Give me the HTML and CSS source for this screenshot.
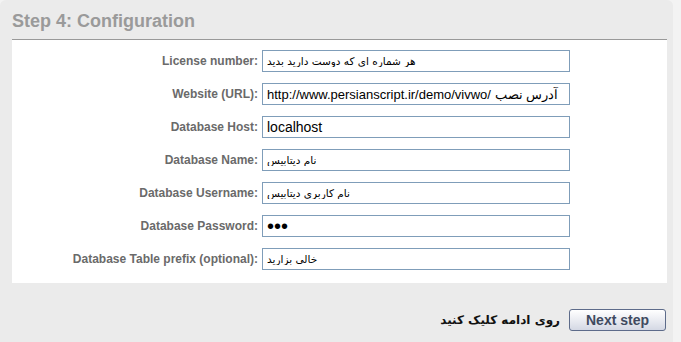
FILE: index.html
```html
<!DOCTYPE html>
<html lang="en">
<head>
  <meta charset="UTF-8">
  <title>Installation - Step 4</title>
  <link rel="stylesheet" href="styles.css">
</head>
<body>
  <div class="wizard">
    <h2 class="step-title">Step 4: Configuration</h2>

    <div class="panel">
      <form class="config-form">
        <label for="license">License number:</label>
        <input type="text" id="license" value="هر شماره اي که دوست داريد بديد">

        <label for="website">Website (URL):</label>
        <input type="text" id="website" class="url" value="http://www.persianscript.ir/demo/vivwo/ آدرس نصب">

        <label for="dbhost">Database Host:</label>
        <input type="text" id="dbhost" class="big" value="localhost">

        <label for="dbname">Database Name:</label>
        <input type="text" id="dbname" value="نام ديتابيس">

        <label for="dbuser">Database Username:</label>
        <input type="text" id="dbuser" value="نام کاربري ديتابيس">

        <label for="dbpass">Database Password:</label>
        <input type="password" id="dbpass" class="pass" value="123">

        <label for="prefix">Database Table prefix (optional):</label>
        <input type="text" id="prefix" value="خالي بزاريد">
      </form>
    </div>

    <div class="actions">
      <span class="hint" dir="rtl">روی ادامه کلیک کنید</span>
      <button type="button" class="btn-next">Next step</button>
    </div>
  </div>
</body>
</html>
```

FILE: styles.css
```css
/* Global Styles */
body {
  margin: 0;
  padding: 0;
  background-color: #f3f3f3;
  font-family: "Liberation Sans", Arial, sans-serif;
}

.wizard {
  width: 655px;
  height: 342px;
  padding: 0 6px 0 12px;
  background-color: #ebebeb;
  border-radius: 6px 6px 0 0;
}

/* Heading */
.step-title {
  margin: 0;
  padding: 11px 0 7px;
  font-size: 18px;
  line-height: 21px;
  color: #9a9a9a;
  border-bottom: 1px solid #999;
}

/* Form panel */
.panel {
  background-color: white;
  padding: 10px 0 13px;
}

.config-form {
  display: grid;
  grid-template-columns: 246px 308px;
  column-gap: 4px;
  row-gap: 11px;
  align-items: center;
}

.config-form label {
  text-align: right;
  font-size: 12px;
  font-weight: bold;
  color: #6a6a6a;
}

.config-form input {
  box-sizing: border-box;
  height: 22px;
  margin: 0;
  padding: 0 4px;
  border: 1px solid #7f9db9;
  font-family: "DejaVu Sans", "Liberation Sans", sans-serif;
  font-size: 10.5px;
  color: #000;
  background: white;
}

.config-form input.big {
  font-family: "Liberation Sans", Arial, sans-serif;
  font-size: 14px;
}

.config-form input.url {
  font-family: "Liberation Sans", Arial, sans-serif;
  font-size: 13px;
}

.config-form input.pass {
  font-family: "Liberation Sans", Arial, sans-serif;
  font-size: 20px;
}

/* Footer actions */
.actions {
  display: flex;
  justify-content: flex-end;
  align-items: center;
  gap: 9px;
  margin-top: 26px;
  padding-right: 1px;
}

.hint {
  font-family: "DejaVu Sans", sans-serif;
  font-size: 12px;
  font-weight: bold;
  color: #111;
}

.btn-next {
  width: 97px;
  height: 22px;
  padding: 0;
  border: 1px solid #5d6b8a;
  border-radius: 3px;
  background: linear-gradient(#ffffff, #e6e8ef 60%, #d4d8e4);
  font-family: "Liberation Sans", Arial, sans-serif;
  font-size: 14px;
  font-weight: bold;
  color: #404a60;
  cursor: pointer;
}
```
